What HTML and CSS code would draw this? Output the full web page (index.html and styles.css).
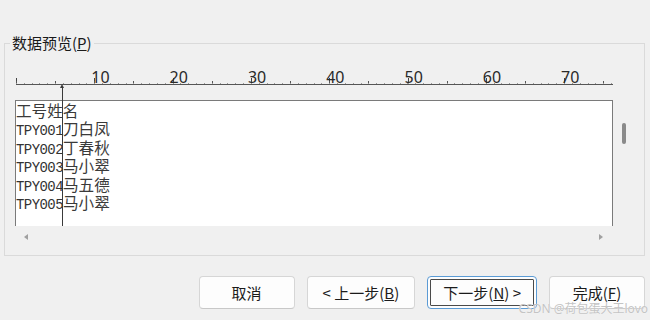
FILE: index.html
```html
<!DOCTYPE html>
<html lang="zh-CN">
<head>
  <meta charset="UTF-8" />
  <title>文本导入向导</title>
  <link rel="stylesheet" href="styles.css">
</head>
<body>
  <fieldset class="group">
    <legend>数据预览(<u>P</u>)</legend>
    <div class="preview">
      <div class="ruler">
        <div class="ruler-nums">
          <span>10</span><span>20</span><span>30</span><span>40</span><span>50</span><span>60</span><span>70</span>
        </div>
        <div class="ruler-scale"></div>
      </div>
      <div class="viewer">
        <div class="text-area">
          <div class="line"><span class="cjk">工号姓名</span></div>
          <div class="line">TPY001<span class="cjk">刀白凤</span></div>
          <div class="line">TPY002<span class="cjk">丁春秋</span></div>
          <div class="line">TPY003<span class="cjk">马小翠</span></div>
          <div class="line">TPY004<span class="cjk">马五德</span></div>
          <div class="line">TPY005<span class="cjk">马小翠</span></div>
        </div>
        <div class="vscroll"><div class="thumb"></div></div>
        <div class="hscroll">
          <span class="arrow arrow-left"></span>
          <span class="arrow arrow-right"></span>
        </div>
      </div>
      <div class="marker"></div>
    </div>
  </fieldset>

  <div class="buttons">
    <button class="btn">取消</button>
    <button class="btn">&lt; 上一步(<u>B</u>)</button>
    <button class="btn btn-focus">下一步(<u>N</u>) &gt;</button>
    <button class="btn">完成(<u>F</u>)</button>
  </div>

  <div class="watermark">CSDN @荷包蛋大王lovo</div>
</body>
</html>
```

FILE: styles.css
```css
* {
  box-sizing: border-box;
}
body {
  margin: 0;
  padding-top: 33px;
  width: 650px;
  height: 320px;
  overflow: hidden;
  background: #f0f0f0;
  color: #1a1a1a;
  font-family: "Noto Sans", "Noto Sans CJK SC", sans-serif;
  position: relative;
}

/* ───── Group box ───── */
.group {
  margin: 0 5px 0 4px;
  padding: 0;
  border: 1px solid #dadada;
}
.group legend {
  margin-left: 5px;
  padding: 0 2px;
  font-family: "Noto Sans CJK SC", sans-serif;
  font-size: 15px;
  line-height: 20px;
  color: #1a1a1a;
}
.preview {
  position: relative;
  padding: 16px 0 7px 10px;
}

/* ───── Ruler ───── */
.ruler {
  width: 597px;
  margin-left: 1px;
}
.ruler-nums {
  display: flex;
  height: 16px;
  padding-left: 75.3px;
  font-family: "Noto Sans", sans-serif;
  font-size: 16px;
  line-height: 16px;
  color: #2a2a2a;
}
.ruler-nums span {
  flex: 0 0 78.3px;
}
.ruler-scale {
  height: 8px;
  margin-top: -8px;
  border-bottom: 1px solid #555;
  background-image:
    repeating-linear-gradient(to right, #999 0 1px, transparent 1px 7.83px),
    repeating-linear-gradient(to right, #555 0 1px, transparent 1px 39.15px),
    repeating-linear-gradient(to right, #444 0 1px, transparent 1px 78.3px);
  background-size: 100% 1px, 100% 3px, 100% 6px;
  background-position: left bottom;
  background-repeat: no-repeat;
}

/* ───── Text viewer ───── */
.viewer {
  display: grid;
  grid-template-columns: 598px 24px;
  grid-template-rows: 126px 22px;
  margin-top: 15px;
}
.text-area {
  padding-top: 1.5px;
  background: #fff;
  border: 1px solid #7a7a7a;
  border-bottom: none;
  font-family: "Liberation Mono", monospace;
  font-size: 14px;
  letter-spacing: -0.57px;
  line-height: 18.6px;
  color: #333;
  overflow: hidden;
}
.line {
  height: 18.6px;
  white-space: pre;
}
.text-area .cjk {
  font-family: "Noto Sans CJK SC", sans-serif;
  font-size: 15.6px;
  line-height: 1;
  letter-spacing: 0;
  color: #3a3a3a;
}
.vscroll {
  padding: 23px 0 0 9px;
}
.thumb {
  width: 4px;
  height: 21px;
  border-radius: 2px;
  background: #8a8a8a;
}
.hscroll {
  display: flex;
  align-items: center;
  justify-content: space-between;
  padding: 0 10px 0 9px;
}
.arrow {
  width: 0;
  height: 0;
  border-top: 3px solid transparent;
  border-bottom: 3px solid transparent;
}
.arrow-left { border-right: 4px solid #a0a0a0; }
.arrow-right { border-left: 4px solid #a0a0a0; }

/* column break marker */
.marker {
  position: absolute;
  left: 57px;
  top: 34px;
  width: 1px;
  height: 139px;
  background: #3a3a3a;
}
.marker::before {
  content: "";
  position: absolute;
  left: -2px;
  top: -3px;
  border-left: 2.5px solid transparent;
  border-right: 2.5px solid transparent;
  border-bottom: 4px solid #3a3a3a;
}

/* ───── Buttons ───── */
.buttons {
  display: flex;
  justify-content: flex-end;
  gap: 12px;
  margin-top: 20px;
  padding-right: 5px;
}
.btn {
  min-width: 96px;
  height: 33px;
  padding: 0 15px;
  border: 1px solid #d6d6d6;
  border-bottom-color: #c8c8c8;
  border-radius: 4px;
  background: #fdfdfd;
  font-family: "Noto Sans CJK SC", sans-serif;
  font-size: 15px;
  color: #1b1b1b;
}
.btn-focus {
  border-color: #5b9bd5;
  outline: 1px solid #4a4a4a;
  outline-offset: -4px;
}

.watermark {
  position: absolute;
  right: 2px;
  bottom: 4px;
  font-family: "Noto Sans", "Noto Sans CJK SC", sans-serif;
  font-size: 12px;
  line-height: 14px;
  color: #c4c4c4;
  text-shadow: 0 0 1px #fff;
}
```
